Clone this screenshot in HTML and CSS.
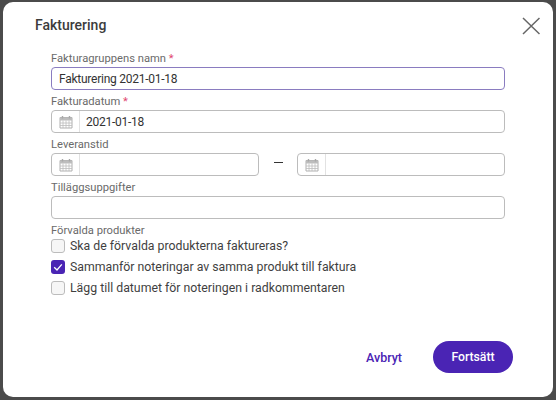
FILE: index.html
```html
<!DOCTYPE html>
<html lang="sv">
<head>
    <meta charset="UTF-8">
    <title>Fakturering</title>
    <link rel="stylesheet" href="styles.css">
</head>
<body>
    <div class="modal">
        <div class="modal-head">
            <h1>Fakturering</h1>
            <svg class="close" width="18" height="18" viewBox="0 0 18 18"><path d="M1 1L17.500 17M17.500 1L1 17"/></svg>
        </div>
        <form class="form">
            <div class="field">
                <label>Fakturagruppens namn <span class="req">*</span></label>
                <div class="input focused"><span class="value name">Fakturering 2021-01-18</span></div>
            </div>
            <div class="field">
                <label>Fakturadatum <span class="req">*</span></label>
                <div class="input">
                    <span class="cal"><svg width="14" height="14" viewBox="0 0 14 14"><use href="#calendar"/></svg></span>
                    <span class="value">2021-01-18</span>
                </div>
            </div>
            <div class="field">
                <label>Leveranstid</label>
                <div class="range">
                    <div class="input">
                        <span class="cal"><svg width="14" height="14" viewBox="0 0 14 14"><use href="#calendar"/></svg></span>
                    </div>
                    <span class="dash"></span>
                    <div class="input">
                        <span class="cal"><svg width="14" height="14" viewBox="0 0 14 14"><use href="#calendar"/></svg></span>
                    </div>
                </div>
            </div>
            <div class="field">
                <label>Tilläggsuppgifter</label>
                <div class="input"></div>
            </div>
            <div class="field checks">
                <label>Förvalda produkter</label>
                <div class="check"><span class="box"></span>Ska de förvalda produkterna faktureras?</div>
                <div class="check"><span class="box on"><svg width="14" height="14" viewBox="0 0 14 14"><path d="M3.2 7.2L6 10L10.8 4.4"/></svg></span>Sammanför noteringar av samma produkt till faktura</div>
                <div class="check"><span class="box"></span>Lägg till datumet för noteringen i radkommentaren</div>
            </div>
        </form>
        <div class="actions">
            <a class="cancel">Avbryt</a>
            <a class="primary">Fortsätt</a>
        </div>
    </div>

    <svg width="0" height="0" class="defs">
        <symbol id="calendar" viewBox="0 0 14 14">
            <path d="M1 2.500h12v10.500h-12z" fill="#fff" stroke="#b0b0b0"/>
            <path d="M1 2.500h12v3h-12z" fill="#bdbdbd"/>
            <path d="M3.500 1v2.500M10.500 1v2.500" stroke="#a8a8a8" stroke-width="1.400"/>
            <path d="M1 8h12M1 10.500h12M4 5.500v7.500M7 5.500v7.500M10 5.500v7.500" stroke="#bdbdbd" stroke-width="0.800"/>
        </symbol>
    </svg>
</body>
</html>
```

FILE: styles.css
```css
html, body {
    height: 100%;
}

body {
    margin: 0;
    padding: 2px 3px 3px;
    box-sizing: border-box;
    background: #4b4b4b;
    font-family: 'Roboto', 'Liberation Sans', sans-serif;
    color: #3a3a3a;
    overflow: hidden;
}

.defs {
    position: absolute;
}

.modal {
    height: 100%;
    background: #fff;
    border-radius: 10px;
    display: flex;
    flex-direction: column;
    box-sizing: border-box;
    padding: 0 40px 24px 32px;
}

.modal-head {
    display: flex;
    justify-content: space-between;
    align-items: center;
    height: 45px;
    margin-right: -27px;
}

h1 {
    margin: 0;
    font-size: 14px;
    font-weight: 500;
    color: #3c3c3c;
}

.close {
    margin-top: 2px;
}

.close path {
    stroke: #666;
    stroke-width: 1.5;
    fill: none;
}

.form {
    display: flex;
    flex-direction: column;
    width: 454px;
    margin-left: 16px;
    flex: 1;
}

.field label {
    display: block;
    height: 20px;
    line-height: 23px;
    font-size: 11.2px;
    color: #6a6a6a;
}

.req {
    color: #e0466e;
}

.input {
    height: 23px;
    flex: 1;
    box-sizing: border-box;
    border: 1px solid #bcbcbc;
    border-radius: 4px;
    display: flex;
    align-items: center;
    font-size: 12px;
    letter-spacing: -0.25px;
    color: #333;
}

.input.focused {
    border-color: #8a7cc0;
}

.cal {
    width: 28px;
    height: 100%;
    box-sizing: border-box;
    border-right: 1px solid #e2e2e2;
    display: flex;
    align-items: center;
    justify-content: center;
}

.value {
    padding-left: 6px;
}

.value.name {
    padding-left: 7px;
}

.range {
    display: flex;
    align-items: center;
}

.dash {
    width: 38px;
    margin-bottom: 4px;
    display: flex;
    justify-content: center;
}

.dash::before {
    content: "";
    width: 9px;
    height: 1px;
    background: #333;
}

.check {
    display: flex;
    align-items: center;
    height: 21px;
    font-size: 12.3px;
    color: #3f3f3f;
}

.checks label {
    height: 16px;
}

.box {
    width: 14px;
    height: 14px;
    box-sizing: border-box;
    border: 1px solid #bcbcbc;
    border-radius: 3px;
    background: #f6f6f6;
    margin-right: 5px;
    flex: none;
}

.box.on {
    background: #4a24b4;
    border: none;
}

.box svg {
    display: block;
}

.box path {
    stroke: #fff;
    stroke-width: 1.3;
    fill: none;
}

.actions {
    display: flex;
    justify-content: flex-end;
    align-items: center;
    gap: 31px;
}

.cancel {
    color: #4a24b4;
    font-size: 12.5px;
    font-weight: 500;
}

.primary {
    width: 80px;
    height: 32px;
    border-radius: 16px;
    background: #4a24b4;
    color: #fff;
    font-size: 12.2px;
    font-weight: 500;
    display: flex;
    align-items: center;
    justify-content: center;
}
```
